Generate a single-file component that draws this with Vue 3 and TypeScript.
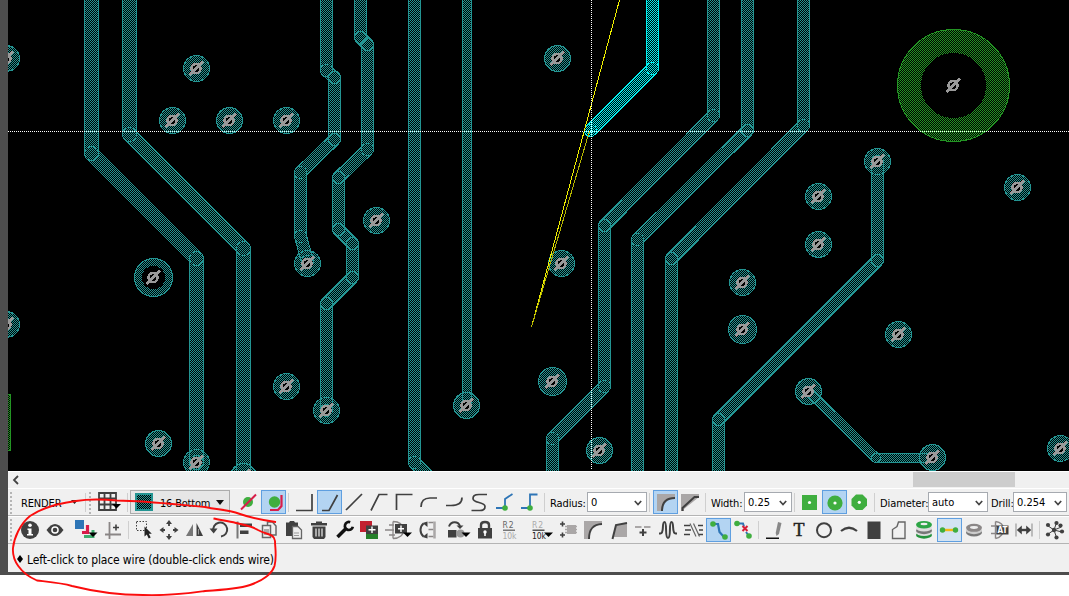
<script setup lang="ts">
type Pt = [number, number]
interface Trace { w: number; pts: Pt[]; hot?: boolean }
interface Via { x: number; y: number; r: number }
interface Tool { w: number; art: string; on?: boolean; soft?: boolean; sep?: boolean }

const traces: Trace[] = [
  { w: 15, pts: [[91.5, -9], [91.5, 153.5], [196.5, 258.5], [196.5, 462.5]] },
  { w: 15, pts: [[129.5, -9], [129.5, 134.5], [243.5, 248.5], [243.5, 485]] },
  { w: 13, pts: [[326.5, -9], [326.5, 70.5], [334.5, 77.5], [334.5, 139.5], [300.5, 172.5], [300.5, 236.5], [307.5, 261.5]] },
  { w: 13, pts: [[360.5, -9], [360.5, 37.5], [367.5, 44.5], [367.5, 149.5], [338.5, 177.5], [338.5, 229.5], [352.5, 243.5], [352.5, 277.5], [326.5, 303.5], [326.5, 410.5]] },
  { w: 13, pts: [[414.5, -9], [414.5, 462.5], [432.5, 480.5]] },
  { w: 10, pts: [[467, -9], [467, 404.5]] },
  { w: 13, hot: true, pts: [[652.5, -9], [652.5, 68.5], [590.5, 130.5]] },
  { w: 13, pts: [[713.5, -9], [713.5, 115.5], [604.5, 225.5], [604.5, 386.5], [552.5, 438.5], [552.5, 485]] },
  { w: 13, pts: [[747.5, -9], [747.5, 130.5], [637.5, 239.5], [637.5, 485]] },
  { w: 13, pts: [[803.5, -9], [803.5, 125.5], [671.5, 258.5], [671.5, 485]] },
  { w: 13, pts: [[877.5, 161.5], [877.5, 260.5], [718.5, 419.5], [718.5, 485]] },
  { w: 10, pts: [[808.5, 391.5], [876, 458], [932, 458]] },
]
const joints = traces.flatMap(t => t.pts.slice(1).map(p => ({ x: p[0], y: p[1], r: t.w / 2 - 0.5, hot: t.hot })))
const join = (p: Pt[]): string => p.map(q => q.join(',')).join(' ')

const via = (x: number, y: number, r = 13): Via => ({ x: x + 0.5, y: y + 0.5, r })
const vias: Via[] = [
  via(196, 68), via(172, 120), via(229, 120), via(286, 120), via(376, 220), via(307, 263), via(6, 58), via(6, 324),
  via(286, 386), via(326, 410), via(466, 405), via(158, 443), via(196, 462), via(243, 476), via(557, 58), via(561, 263),
  via(742, 282), via(742, 329, 14), via(818, 196), via(818, 244), via(877, 161), via(1017, 187), via(898, 334),
  via(552, 381, 14), via(599, 450), via(808, 391), via(932, 457), via(1060, 448),
]
const marks: Pt[] = [...vias.map(v => [v.x, v.y] as Pt), [153.5, 277.5], [953.5, 85.5]]

const D = '#404040'
const G = '#3fae3f'
const ln = (d: string, c = D, w = 2): string => `<path d="${d}" fill="none" stroke="${c}" stroke-width="${w}"/>`
const fl = (d: string, c = D): string => `<path d="${d}" fill="${c}"/>`
const dot = (x: number, y: number, r: number, c = G): string => `<circle cx="${x}" cy="${y}" r="${r}" fill="${c}"/>`
const drop = (x: number): string => fl(`M${x} 14.5h9l-4.5 4.5z`, '#000')
const txt = (x: number, y: number, s: number, c: string, t: string, extra = ''): string =>
  `<text x="${x}" y="${y}" font-size="${s}" fill="${c}" font-family="DejaVu Sans Condensed, DejaVu Sans, sans-serif" ${extra}>${t}</text>`
const sep = (w: number): Tool => ({ w, art: '', sep: true })

const clearTools: Tool[] = [
  { w: 25, art: dot(12, 12, 5) + ln('M5 19.5L20 4.5', '#d81e4a', 2) },
  { w: 25, on: true, art: dot(13.5, 12, 5.7) + ln('M9 20h8l3.500-4V5', '#d81e4a', 2.2) },
]
const bendTools: Tool[] = [
  { w: 25, art: ln('M4 20.500h16V4', D, 1.7) },
  { w: 25, on: true, art: ln('M5 20.500h7L20.500 5', D, 1.7) },
  { w: 25, art: ln('M4 20L20 4', D, 1.7) },
  { w: 25, art: ln('M4 20.500L12 4.500h8.500', D, 1.7) },
  { w: 25, art: ln('M4.500 20V4.500h16', D, 1.7) },
  { w: 25, art: ln('M4 17c0-6 3-9 9-9h7', D, 1.7) },
  { w: 25, art: ln('M4 15.500h5c8 0 11-3 11-8', D, 1.7) },
  { w: 25, art: ln('M20 4.500h-8c-5 0-6 2-6 4 0 5 12 3 12 8 0 3-2 4-5 4H4.500', D, 1.7) },
  { w: 25, art: ln('M4 18h9V9l7.500-5', '#2e75b6', 1.8) + dot(13, 18, 2.8) },
  { w: 25, art: ln('M4 18h9V4.500h7.500', '#2e75b6', 1.8) + dot(13, 18, 2.8) },
]
const miterTools: Tool[] = [
  { w: 25, on: true, art: fl('M4 4h18v4c-9 0-12 4-13 13H4z', '#aaa7a7') + ln('M9 21c0-9 5-13 13-13') },
  { w: 25, art: fl('M3 4h18v3L6 19v2H3z', '#aaa7a7') + ln('M4.500 21v-3L16.500 7h4.500') },
]
const padTools: Tool[] = [
  { w: 25, art: fl('M5 5h15v15H5z', G) + dot(12.5, 12.5, 1.6, '#fff') },
  { w: 25, on: true, art: dot(13, 13, 7.6) + dot(13, 13, 1.6, '#fff') },
  { w: 25, art: fl('M9 4.500h6.500l4.500 4.500v6.500L15.500 20H9l-4.500-4.500V9z', G) + dot(12.3, 12.3, 1.6, '#fff') },
]

const editTools: Tool[] = [
  { w: 25, art: dot(13, 12, 9, D) + dot(13, 7.2, 1.8, '#fff') + fl('M10.500 10.500h4v5.500h1.500v1.500h-6v-1.500h1.500v-4h-1z', '#fff') },
  { w: 25, art: fl('M4.500 12q8.500-12 17 0q-8.500 12-17 0z') + dot(13, 12, 3.8, '#fff') + dot(13, 12, 2.3, D) },
  { w: 34, art: fl('M8 2h9v9H8z', '#2e75b6') + ln('M15 14.500h5.500V7', '#d81e4a', 3.2) + ln('M17 18.500h9V12', '#3fae6f', 3) + drop(21.5) },
  { w: 25, art: ln('M8.500 4v17M4 16.500h16', '#8a8686', 1.8) + ln('M15 6.500v6M12 9.500h6', D, 1.6) },
  sep(5),
  { w: 25, art: '<rect x="5.500" y="3.500" width="10" height="9" fill="none" stroke="#404040" stroke-dasharray="1.500 1.500"/>' + fl('M13.500 8.500v10l2.300-2 1.900 3.900 2-1-1.900-3.700h3z', '#222') },
  { w: 25, art: fl('M13 2l3 4h-6zM13 22l3-4h-6zM3.500 12l4-3v6zM22.500 12l-4-3v6z') + ln('M13 6v2M13 16v2M7 12h2M17 12h2', D, 1.8) },
  { w: 25, art: fl('M5 18L12 6v12z', '#777') + fl('M15.500 5L22 18h-6.500z') + ln('M17.500 11v5.500', '#999', 1) },
  { w: 25, art: ln('M15 18.500A7 7 0 1 0 7.500 13.500') + fl('M3.500 10.500h8l-3.800 5z') },
  { w: 25, art: ln('M6.500 3.500v17', '#777') + fl('M9 5.500h12V9H9zM9 12.500h8.500V16H9z') },
  { w: 25, art: ln('M6.500 7.500h8v12h-8zM11.500 7V4h5l3.500 4v9h-5', '#666', 1.5) + fl('M8 11h5v6H8z', '#aaa') },
  { w: 25, art: fl('M5 4.500h3L9 3h4l1 1.500h3V9H5zM5 8h6v10H5z') + '<path d="M11.500 8.500h5.500l3.500 3.500v8.500h-9z" fill="#eee" stroke="#666" stroke-width="1.300"/>' + ln('M13 15h5M13 17.500h5', '#999', 1) },
  { w: 25, art: fl('M5 5h5V3.500h6V5h5v2.500H5zM6.500 8.500h13V19l-1.500 2h-10l-1.500-2z') + ln('M10 10.500v8M13 10.500v8M16 10.500v8', '#eee', 1.2) },
  { w: 25, art: ln('M6.500 19L15.500 10', '#111', 3.6) + ln('M19.200 4.200a4 4 0 1 0 2.600 4.600', '#111', 2.7) },
  { w: 25, art: fl('M4 3h12v11H4z', '#c22030') + fl('M10 13h12v8H10z', '#25802a') + fl('M10 7.500h12v8.500H10z') + ln('M16 8.500v6.500M12.500 11.800h7', '#fff', 1.4) },
  { w: 34, art: ln('M12 3.500v17M12 3.500c7 0 10 4 10.500 8.500s-4 8.500-10.500 8.500M8 7h5M8 17h6M4 12h9', '#8b8787', 1.3) + fl('M14 6h12v9.500H14z') + ln('M20 7.500v6.500M17 10.800h6', '#fff', 1.4) + drop(22) },
  { w: 25, art: ln('M8.500 5.500C4.500 9 4.500 15 8.500 18.500') + fl('M12.500 3.500v5.500l-5-4zM12.500 20.500V15l-5 4z') + ln('M13.500 4.500h5M13.500 11.500h5M13.500 18.500h5', '#8b8787', 1.3) + ln('M19.500 3.500v17', '#aaa7a7', 2.5) },
  { w: 32, art: fl('M8 12h8.500v7.500H8z') + dot(20.5, 15.5, 4, '#999') + ln('M9 8.500C11 3 18 3 20 8') + fl('M16.500 7.500h7L20 11z') + drop(21.5) },
  { w: 25, art: fl('M6 10h14v10.500H6z') + ln('M9 10V7q0-3 4-3t4 3v3', D, 2.4) + dot(13, 14, 1.7, '#fff') + fl('M12.200 14h1.600v4h-1.600z', '#fff') },
  { w: 25, art: txt(5.5, 9.5, 8.5, '#666', 'R2', 'textLength="11"') + fl('M6 11.500h12v1.500H6z', '#777') + txt(5.5, 21, 8.5, '#aaa', '10k', 'textLength="14"') },
  { w: 34, art: txt(10, 9.5, 8.5, '#aaa', 'R2', 'textLength="11"') + fl('M10.500 11.500h12v1.500h-12z', '#555') + txt(10, 21, 8.5, '#222', '10k', 'textLength="14"') + drop(22) },
  { w: 25, art: ln('M6.500 3.500v5M4 6h5M6.500 14.500v5M4 17h5', D, 1.6) + fl('M11 7h9v9h-9z', '#aaa7a7') + ln('M9 8.500h12M9 11.500h12M9 14.500h12', '#aaa7a7', 1.4) },
  { w: 25, art: fl('M3 3h18v3c-9 0-12 4-13 15H3z', '#aaa7a7') + ln('M8 21C8 11 12 6.500 21 6') },
  { w: 25, art: fl('M10 7l11-2v14H7z', '#aaa7a7') + ln('M6.500 21L10 7l11-2') },
  { w: 25, art: ln('M4 9h6.500M13 9h6.500', '#aaa7a7', 1.8) + ln('M12 11v7M8.500 14.500h7') },
  { w: 25, art: ln('M3 15.500h1.500c4 0 1-11.500 4-11.500s0 16 3.500 16S12.500 4 15.500 4s0 11.500 4 11.500H21') },
  { w: 25, art: ln('M3 7.500h6M4 12h6M3 16.500h6M17 7.500h5M18 12h4M17 16.500h5', D, 1.5) + ln('M9 5.500l6 13M12.500 5.500l6 13', '#666', 1.2) },
  { w: 25, on: true, art: ln('M6.500 6h5.500l1.500 8 5 5.500', '#2e75b6', 2.2) + dot(7, 6, 2.8) + dot(19, 19, 2.8) },
  { w: 25, art: ln('M6 5.500h6l1 3M15 14l3 4', '#2e75b6') + dot(6, 5.5, 2.8) + dot(18, 18, 2.8) + ln('M11.500 8l5 5M16.500 8l-5 5', '#d81e3a', 2) },
  sep(6),
  { w: 25, art: fl('M4 19.500h13V21H4z', '#111') + fl('M16 4l3.500 1-2.500 11-2.500 2-.800-3z', '#888') },
  { w: 25, art: txt(6.5, 18, 18, '#222', 'T', 'style="font-family:Liberation Serif,serif" stroke="#222" stroke-width=".500"') },
  { w: 25, art: '<circle cx="12" cy="12.200" r="7" fill="none" stroke="#404040" stroke-width="2"/>' },
  { w: 25, art: ln('M4 13q8-6.500 16 0', D, 2.2) },
  { w: 25, art: fl('M5.500 3.500h13v17.500h-13z') },
  { w: 25, art: ln('M5.500 20.500V11.500l4.500-3 1.500-4.500h6.500v16.500z', '#666', 1.4) },
  { w: 25, art: '<ellipse cx="12" cy="17" rx="8" ry="3.700" fill="#25933d"/><ellipse cx="12" cy="14.500" rx="8" ry="3.500" fill="#ddd"/><ellipse cx="12" cy="12.500" rx="8" ry="3.700" fill="#777"/><ellipse cx="12" cy="10" rx="8" ry="3.500" fill="#ddd"/><ellipse cx="12" cy="6.700" rx="8" ry="3.800" fill="#2da545"/><ellipse cx="12" cy="6" rx="3.500" ry="1.200" fill="#eee"/>' },
  { w: 25, on: true, soft: true, art: ln('M5.500 12h13', '#f5b915', 2.4) + dot(5.5, 12, 2.7) + dot(18.5, 12, 2.7) },
  { w: 25, art: '<ellipse cx="12" cy="14.500" rx="8" ry="4" fill="#777"/><ellipse cx="12" cy="12.500" rx="8" ry="3.700" fill="#ccc"/><ellipse cx="12" cy="9.800" rx="8" ry="4" fill="#8b8787"/><ellipse cx="12" cy="9.500" rx="4" ry="1.400" fill="#eee"/>' },
  { w: 25, art: ln('M4 8h6M4 15.500h6M8.500 3.500v17M8.500 3.500c7 1 8 5 8 8s-2 8-8 9', '#8b8787', 1.4) + fl('M9.500 7.500h12v9h-12z') + txt(10.5, 15, 8, '#fff', 'AT', 'textLength="10" font-weight="bold"') },
  { w: 25, art: ln('M4 5.500v13M20 5.500v13', '#999', 1.2) + ln('M7 12h10', D, 2.4) + fl('M4.800 12l5-4.500v9zM19.200 12l-5-4.500v9z') },
  sep(5),
  { w: 25, art: ln('M12 12L14.500 4.800M12 12L5.500 7.500M12 12L19.500 9M12 12L5.500 16.500M12 12L14.500 19.500M12 12L20 14', D, 1) + dot(12, 12, 2.2, D) + dot(14.5, 5, 2.1, D) + dot(6, 7, 2.1, D) + dot(18.5, 7.5, 2.1, D) + dot(6, 16.5, 2.1, D) + dot(14.5, 19.5, 2.1, D) + dot(20, 13.5, 2.1, D) },
]
</script>

<template>
  <div class="screen">
    <div class="window">
      <svg class="board" viewBox="8 0 1061 471" width="1061" height="471">
        <defs>
          <pattern id="teal" width="2" height="2" patternUnits="userSpaceOnUse"><path d="M0 0h1v1h-1zM1 1h1v1h-1z" fill="#239492" /></pattern>
          <pattern id="cyan" width="2" height="2" patternUnits="userSpaceOnUse"><path d="M0 0h1v1h-1zM1 1h1v1h-1z" fill="#00eeee" /></pattern>
          <pattern id="green" width="2" height="2" patternUnits="userSpaceOnUse"><path d="M0 0h1v1h-1zM1 1h1v1h-1z" fill="#239423" /></pattern>
        </defs>
        <rect x="8" width="1061" height="471" fill="#000" />
        <g shape-rendering="crispEdges" fill="none" stroke-linejoin="round" stroke-linecap="round">
          <g v-for="(t, i) in traces" :key="i">
            <polyline :points="join(t.pts)" :stroke="t.hot ? '#00eeee' : '#239492'" :stroke-width="t.w" />
            <polyline :points="join(t.pts)" stroke="#000" :stroke-width="t.w - 2" />
            <polyline :points="join(t.pts)" :stroke="t.hot ? 'url(#cyan)' : 'url(#teal)'" :stroke-width="t.w - 2" />
          </g>
          <circle v-for="(j, i) in joints" :key="'j' + i" :cx="j.x" :cy="j.y" :r="j.r" :stroke="j.hot ? '#00eeee' : '#239492'" stroke-width="1" />
          <circle v-for="(v, i) in vias" :key="'v' + i" :cx="v.x" :cy="v.y" :r="v.r" fill="url(#teal)" stroke="#239492" />
          <circle cx="153.5" cy="277.5" r="19" fill="url(#teal)" stroke="#239492" />
          <circle cx="153.5" cy="277.5" r="11.5" fill="#000" />
          <circle cx="953.5" cy="85.5" r="56" fill="url(#green)" stroke="#239423" />
          <circle cx="953.5" cy="85.5" r="32.5" fill="#000" />
          <rect x="5.5" y="394.5" width="5" height="56" fill="url(#green)" stroke="#239423" />
          <g v-for="(m, i) in marks" :key="'m' + i" stroke="#999">
            <circle :cx="m[0] - 0.5" :cy="m[1]" r="4.500" fill="#000" stroke-width="2.500" />
            <path :d="`M${m[0] - 7} ${m[1] + 6.5}l13.500 -13.500`" stroke-width="2.200" stroke-linecap="butt" />
          </g>
          <path d="M619.500 0L531.500 327" stroke="#f0f000" stroke-linecap="butt" />
          <path d="M589.500 131L531.500 327" stroke="#b4b400" stroke-linecap="butt" />
          <path d="M8 131.500H1069M591.500 0V469" stroke="#fff" stroke-dasharray="1 1" stroke-linecap="butt" />
        </g>
      </svg>

      <div class="scroll">
        <svg width="8" height="10" viewBox="0 0 8 10"><path d="M6 1L2 5l4 4" fill="none" stroke="#444" stroke-width="1.800" /></svg>
        <i class="thumb"></i>
      </div>

      <div class="bar top">
        <i class="grip"></i>
        <span class="render">RENDER</span>
        <svg class="caret" width="7" height="4"><path d="M0 0h7l-3.500 4z" fill="#222" /></svg>
        <i class="rule"></i>
        <i class="grip second"></i>
        <svg class="grid" width="25" height="24" viewBox="0 0 25 24">
          <path d="M3 3h17v17H3zM8.500 3v17M14.500 3v17M3 8.500h17M3 14.500h17" fill="none" stroke="#404040" stroke-width="1.800" />
          <path d="M16 14h9l-4.500 4.500z" fill="#000" />
        </svg>
        <i class="rule"></i>
        <div class="layer">
          <svg width="18" height="18" viewBox="0 0 18 18" shape-rendering="crispEdges">
            <defs><pattern id="swatch" width="2" height="2" patternUnits="userSpaceOnUse"><path d="M0 0h1v1h-1zM1 1h1v1h-1z" fill="#239492" /></pattern></defs>
            <rect width="18" height="18" fill="#239492" /><rect x="2" y="2" width="14" height="14" fill="#000" /><rect x="2" y="2" width="14" height="14" fill="url(#swatch)" />
          </svg>
          <span>16 Bottom</span>
          <svg width="8" height="5"><path d="M0 0h8l-4 5z" fill="#111" /></svg>
        </div>
        <div class="set clear"><span v-for="(t, i) in clearTools" :key="i" class="tool" :class="{ on: t.on }"><svg width="25" height="24" v-html="t.art"></svg></span></div>
        <i class="rule"></i>
        <div class="set bends"><span v-for="(t, i) in bendTools" :key="i" class="tool" :class="{ on: t.on }"><svg width="25" height="24" v-html="t.art"></svg></span></div>
        <i class="rule"></i>
        <label class="radius">Radius:</label>
        <div class="combo w60"><span>0</span><svg width="8" height="6"><path d="M.800 1L4 4.500 7.200 1" /></svg></div>
        <i class="rule"></i>
        <div class="set miter"><span v-for="(t, i) in miterTools" :key="i" class="tool" :class="{ on: t.on }"><svg width="25" height="24" v-html="t.art"></svg></span></div>
        <i class="rule"></i>
        <label class="width">Width:</label>
        <div class="combo w48"><span>0.25</span><svg width="8" height="6"><path d="M.800 1L4 4.500 7.200 1" /></svg></div>
        <i class="rule"></i>
        <div class="set"><span v-for="(t, i) in padTools" :key="i" class="tool" :class="{ on: t.on }"><svg width="25" height="24" v-html="t.art"></svg></span></div>
        <i class="rule"></i>
        <label class="diameter">Diameter:</label>
        <div class="combo w60"><span>auto</span><svg width="8" height="6"><path d="M.800 1L4 4.500 7.200 1" /></svg></div>
        <label class="drill">Drill:</label>
        <div class="combo w54"><span>0.254</span><svg width="8" height="6"><path d="M.800 1L4 4.500 7.200 1" /></svg></div>
      </div>

      <div class="bar edit">
        <i class="grip"></i>
        <div class="set">
          <span v-for="(t, i) in editTools" :key="i" class="tool" :class="{ on: t.on, soft: t.soft, gap: t.sep }" :style="{ width: t.w + 'px' }">
            <svg v-if="!t.sep" :width="t.w" height="24" v-html="t.art"></svg>
          </span>
        </div>
      </div>

      <div class="status">
        <svg width="6" height="8"><path d="M3 0l3 4-3 4-3-4z" fill="#000" /></svg>
        <span>Left-click to place wire (double-click ends wire)</span>
      </div>
    </div>

    <svg class="scribble" width="290" height="110" viewBox="0 486 290 110">
      <path d="M276 522C262 520 254 519 240 514C226 509 218 510 205 507C180 505 150 501 117 500.500C100 499 88 499 76 501C60 503 42 508 30 516C20 524 14 538 13 548C12 560 20 573 37 580.500C50 582 62 583 72 586C96 592 120 595 143 595C170 596 190 593 205 591C222 590 238 589 250 585C264 580 272 574 274.500 566C277 556 275 548 275 541C274 533 266 535 258 530C252 526 244 525 236 523C228 521 220 520 213.500 518.500" fill="none" stroke="#fb0d0d" stroke-width="1.900" />
    </svg>
  </div>
</template>

<style>
body { background: #fff; overflow: hidden; }
</style>

<style scoped>
.screen { position: relative; width: 1069px; height: 596px; background: #fff; overflow: hidden; font: 11px "DejaVu Sans Condensed", "DejaVu Sans", sans-serif; color: #000; }
.window { box-sizing: border-box; width: 1069px; height: 575px; border-left: 8px solid #4d4d4d; border-bottom: 3px solid #4d4d4d; background: #f0f0f0; }
.board { display: block; }
.scroll { display: flex; box-sizing: border-box; height: 18px; border-top: 1px solid #fff; border-bottom: 1px solid #fff; background: #f0f0f0; }
.scroll svg { margin: 3px 0 0 4px; }
.thumb { width: 102px; height: 15px; margin-left: 893px; background: #cdcdcd; }
.bar { display: flex; box-sizing: border-box; white-space: nowrap; }
.bar > * { flex: none; }
.top { height: 27px; padding: 1px 0; border-bottom: 1px solid #b4b4b4; align-items: center; }
.edit { height: 28px; padding-top: 1px; border-top: 1px solid #fff; border-bottom: 1px solid #b4b4b4; }
.grip { width: 2px; height: 22px; margin: 1px 0 0 2px; background: repeating-linear-gradient(#b5b5b5 0 2px, transparent 2px 4px); }
.render { width: 41px; margin-left: 9px; padding-top: 2px; letter-spacing: -0.15px; }
.caret { margin: 0 5px 0 9px; }
.rule { width: 1px; height: 19px; margin: 0 2px; background: #cfcfcf; }
.grip.second { margin-left: 1px; }
.grid { margin: 0 4px 0 5px; }
.layer { display: flex; align-items: center; box-sizing: border-box; width: 100px; height: 24px; margin-left: 0; padding: 0 5px 0 4px; border: 1px solid #acacac; background: #e6e6e6; }
.layer span { flex: 1; margin-left: 7px; padding-top: 2px; letter-spacing: -0.2px; }
.set { display: flex; }
.clear { margin-left: 6px; }
.bends { margin-left: 1px; }
.tool { box-sizing: border-box; width: 25px; height: 24px; }
.tool svg { display: block; }
.tool.on { background: #b3d4f2; box-shadow: inset 0 0 0 1px #5f9fe0; }
.tool.soft { background: #d3e3f2; }
.tool.gap { background: linear-gradient(#cfcfcf, #cfcfcf) 2px 3px / 1px 18px no-repeat; }
.edit .grip { margin-right: 5px; }
label { padding-top: 2px; letter-spacing: -0.1px; }
.radius { width: 37px; margin-left: 3px; }
.miter { margin-left: 1px; }
.width { width: 33px; margin-left: 3px; }
.diameter { width: 48px; margin-left: 3px; }
.drill { width: 22px; margin-left: 3px; }
.combo { display: flex; align-items: center; justify-content: space-between; box-sizing: border-box; height: 20px; padding: 1px 4px 0 3px; border: 1px solid #a6aab0; background: #fff; }
.combo path { fill: none; stroke: #444; stroke-width: 1.7; }
.w60 { width: 60px; }
.w48 { width: 48px; }
.w54 { width: 54px; }
.status { display: flex; align-items: center; height: 28px; padding: 1px 0 0 9px; font-size: 12px; }
.status span { margin-left: 4px; padding-top: 1px; letter-spacing: -0.13px; white-space: nowrap; }
.scribble { position: absolute; left: 0; top: 486px; }
</style>
